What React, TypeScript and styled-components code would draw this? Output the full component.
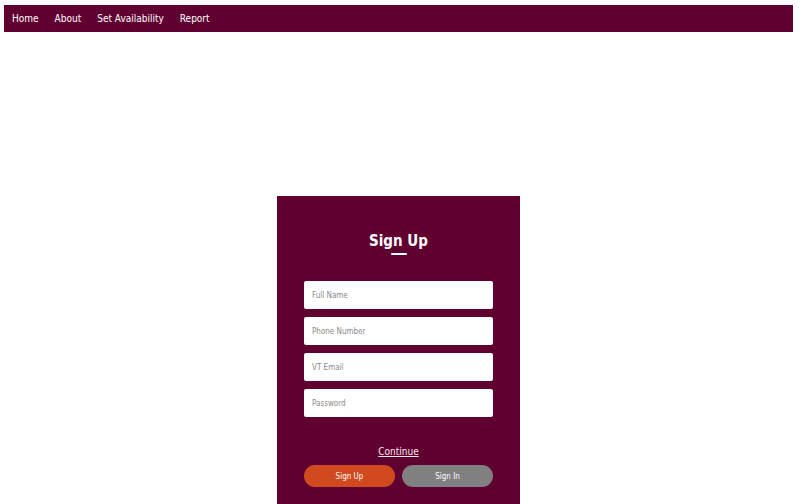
import styled, { createGlobalStyle } from "styled-components";

const GlobalStyle = createGlobalStyle`
  html, body {
    margin: 0;
    padding: 0;
    background: #ffffff;
    font-family: "DejaVu Sans Condensed", "DejaVu Sans", sans-serif;
  }
`;

// the right padding leaves room where the reference shows a scrollbar
const StyledPage = styled.div`
  padding: 5px 13px 8px 4px;
`;

const StyledNav = styled.nav`
  display: flex;
  align-items: center;
  gap: 16px;
  height: 27px;
  padding: 0 8px;
  background-color: #600030;
`;

const StyledNavLink = styled.a`
  color: #ffffff;
  font-size: 10px;
  line-height: 14px;
  text-decoration: none;
`;

const StyledMain = styled.main`
  display: flex;
  justify-content: center;
  padding-top: 164px;
`;

const StyledCard = styled.section`
  display: flex;
  flex-direction: column;
  width: 243px;
  box-sizing: border-box;
  padding: 35px 27px 58px;
  background-color: #600030;
`;

const StyledHeading = styled.h2`
  margin: 0;
  color: #ffffff;
  font-size: 15px;
  line-height: 20px;
  font-weight: bold;
  text-align: center;
`;

const StyledUnderline = styled.div`
  width: 16px;
  height: 2px;
  margin: 2px auto 0;
  border-radius: 1px;
  background-color: #ffffff;
`;

const StyledFields = styled.div`
  display: flex;
  flex-direction: column;
  gap: 8px;
  margin-top: 26px;
`;

const StyledInput = styled.input`
  height: 28px;
  box-sizing: border-box;
  padding: 0 8px;
  border: none;
  border-radius: 2px;
  background: #ffffff;
  font-family: inherit;
  font-size: 8px;
  color: #333333;

  &::placeholder {
    color: #8a8a8a;
  }
`;

const StyledContinue = styled.a`
  margin-top: 28px;
  align-self: center;
  color: #f4e8ee;
  font-size: 10px;
  line-height: 14px;
  text-decoration: underline;
`;

const StyledButtons = styled.div`
  display: grid;
  grid-template-columns: 1fr 1fr;
  gap: 7px;
  margin-top: 6px;
`;

const StyledButton = styled.button<{ $tone: "primary" | "muted" }>`
  height: 22px;
  padding: 0;
  border: none;
  border-radius: 11px;
  background-color: ${(p) => (p.$tone === "primary" ? "#d0491f" : "#808080")};
  color: #ffffff;
  font-family: inherit;
  font-size: 8px;
`;

const fields = ["Full Name", "Phone Number", "VT Email", "Password"];

function App() {
  return (
    <StyledPage>
      <GlobalStyle />
      <StyledNav>
        <StyledNavLink href="#">Home</StyledNavLink>
        <StyledNavLink href="#">About</StyledNavLink>
        <StyledNavLink href="#">Set Availability</StyledNavLink>
        <StyledNavLink href="#">Report</StyledNavLink>
      </StyledNav>
      <StyledMain>
        <StyledCard>
          <StyledHeading>Sign Up</StyledHeading>
          <StyledUnderline />
          <StyledFields>
            {fields.map((f) => (
              <StyledInput
                key={f}
                placeholder={f}
                type={f === "Password" ? "password" : "text"}
              />
            ))}
          </StyledFields>
          <StyledContinue href="#">Continue</StyledContinue>
          <StyledButtons>
            <StyledButton $tone="primary">Sign Up</StyledButton>
            <StyledButton $tone="muted">Sign In</StyledButton>
          </StyledButtons>
        </StyledCard>
      </StyledMain>
    </StyledPage>
  );
}

export default App;
